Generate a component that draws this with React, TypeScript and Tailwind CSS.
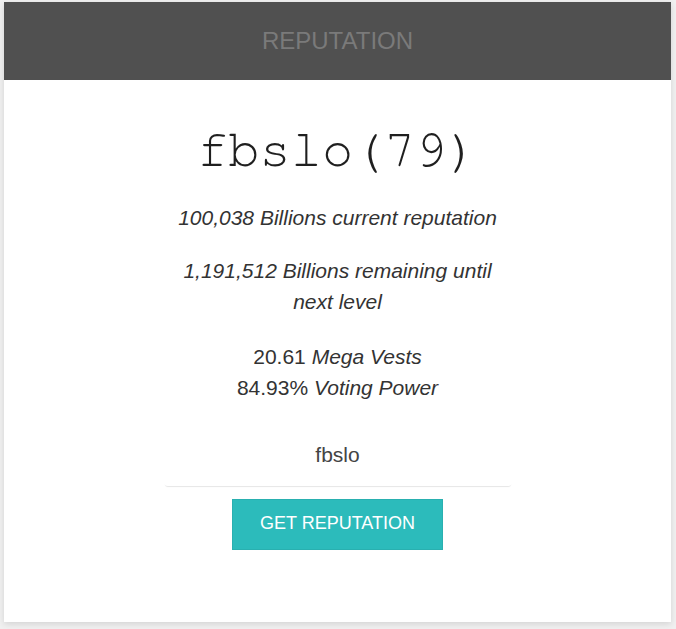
import React from "react";

const App = () => {
  return (
    <div className="min-h-[629px] w-[676px] bg-[#f0f0f0] pt-[2px] pl-[4px]">
      <div className="w-[667px] h-[620px] bg-white shadow-[0_2px_6px_rgba(0,0,0,0.12)]">
        {/* Header */}
        <div className="h-[78px] bg-[#505050] flex items-center justify-center">
          <span className="font-['Liberation_Sans',Arial,sans-serif] text-[24px] text-[#7a7a7a]">
            REPUTATION
          </span>
        </div>

        {/* Body */}
        <div className="flex flex-col items-center">
          <div className="w-[348px] flex flex-col items-center text-center text-[#333] font-['Liberation_Sans',Arial,sans-serif] text-[21px] leading-[31.5px]">
            <div className="mt-[40px] h-[60px] font-['Nimbus_Mono_PS','FreeMono','Courier_New',monospace] text-[52px] leading-[60px] text-[#1f1f1f] whitespace-nowrap">
              fbslo(79)
            </div>
            <p className="mt-[22px] italic">100,038 Billions current reputation</p>
            <p className="mt-[21px] italic">1,191,512 Billions remaining until next level</p>
            <div className="mt-[23px]">
              <div>
                20.61 <i>Mega Vests</i>
              </div>
              <div>
                84.93% <i>Voting Power</i>
              </div>
            </div>
            <input
              defaultValue="fbslo"
              className="mt-[20px] w-[348px] h-[62px] text-center text-[21px] text-[#444] outline-none rounded-[4px] bg-white shadow-[0_2px_1px_-1px_rgba(0,0,0,0.1)]"
            />
            <button className="mt-[13px] w-[211px] h-[51px] bg-[#2cbbbb] border border-[#29b0b0] text-white text-[18px] uppercase font-['Liberation_Sans',Arial,sans-serif]">
              Get Reputation
            </button>
          </div>
        </div>
      </div>
    </div>
  );
};

export default App;
